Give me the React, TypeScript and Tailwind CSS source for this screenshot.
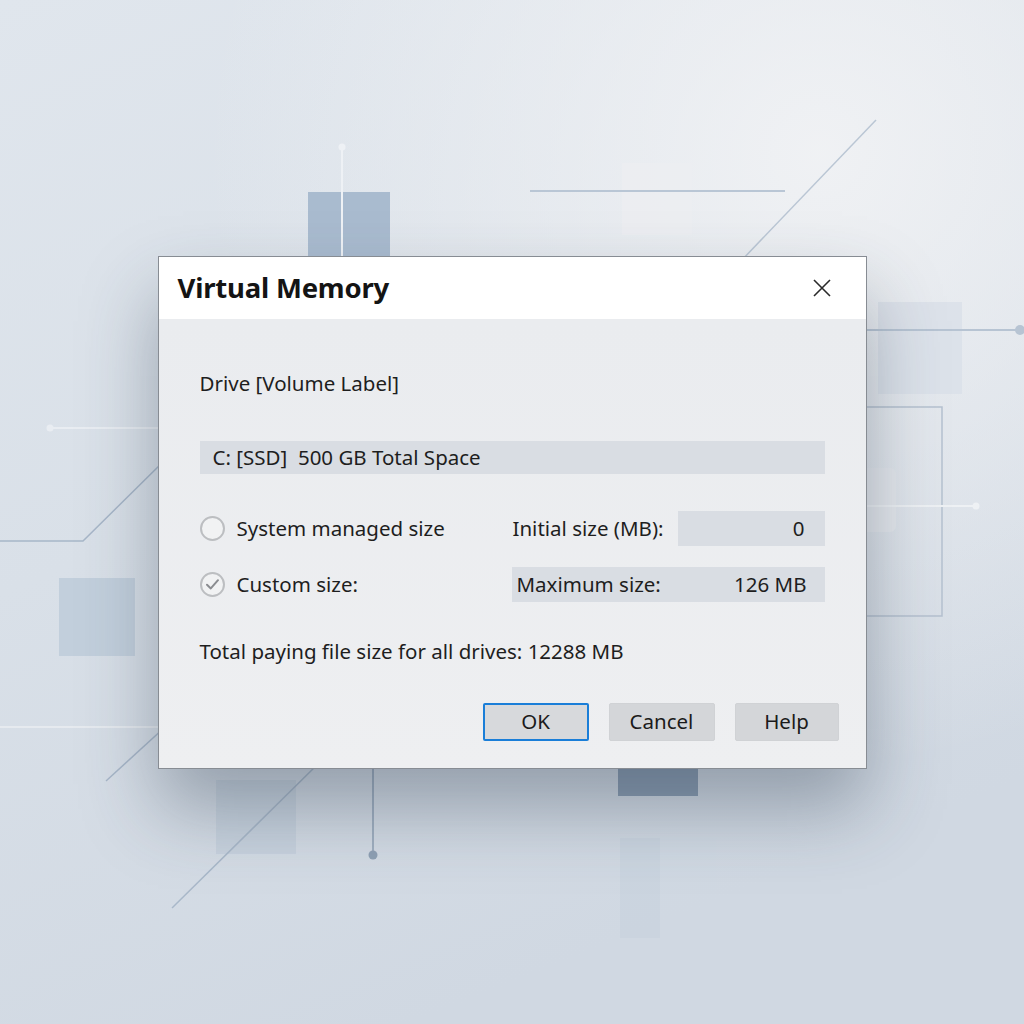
import React from 'react';

const font = { fontFamily: '"Noto Sans", "Open Sans", sans-serif' };

// Soft backdrop with thin circuit-like lines and tiles
const Backdrop: React.FC = () => (
  <svg className="absolute inset-0 h-full w-full" viewBox="0 0 1024 1024" preserveAspectRatio="none">
    <defs>
      <linearGradient id="bg" x1="0" y1="0" x2="0.4" y2="1">
        <stop offset="0" stopColor="#e0e6ed" />
        <stop offset="0.5" stopColor="#d9e0e8" />
        <stop offset="1" stopColor="#d0d8e2" />
      </linearGradient>
      <radialGradient id="glow" cx="0.8" cy="0.15" r="0.6">
        <stop offset="0" stopColor="#f2f3f5" stopOpacity="0.9" />
        <stop offset="1" stopColor="#f2f3f5" stopOpacity="0" />
      </radialGradient>
    </defs>
    <rect width="1024" height="1024" fill="url(#bg)" />
    <rect width="1024" height="1024" fill="url(#glow)" />

    {/* top */}
    <rect x="308" y="192" width="82" height="70" fill="#a9bbcf" />
    <line x1="342" y1="147" x2="342" y2="262" stroke="#eef1f5" strokeWidth="2" />
    <circle cx="342" cy="147" r="3.5" fill="#eef1f5" />
    <rect x="622" y="163" width="70" height="72" fill="#eceef1" opacity="0.8" />
    <line x1="530" y1="191" x2="785" y2="191" stroke="#b9c6d5" strokeWidth="2" />
    <line x1="876" y1="120" x2="740" y2="262" stroke="#bac6d4" strokeWidth="1.5" />

    {/* right */}
    <rect x="878" y="302" width="84" height="92" fill="#d9e0e8" opacity="0.8" />
    <line x1="860" y1="330" x2="1018" y2="330" stroke="#b7c4d3" strokeWidth="2" />
    <circle cx="1020" cy="330" r="5" fill="#b7c4d3" />
    <rect x="860" y="407" width="82" height="209" fill="none" stroke="#b5c1cf" strokeWidth="1.5" />
    <rect x="856" y="468" width="40" height="64" rx="6" fill="#e6e9ed" opacity="0.8" />
    <line x1="860" y1="506" x2="975" y2="506" stroke="#eef1f4" strokeWidth="2" />
    <circle cx="976" cy="506" r="3.5" fill="#eef1f4" />

    {/* left */}
    <line x1="50" y1="428" x2="165" y2="428" stroke="#e9edf2" strokeWidth="2" />
    <circle cx="50" cy="428" r="3.5" fill="#e9edf2" />
    <polyline points="0,541 83,541 165,460" fill="none" stroke="#a7b6c8" strokeWidth="1.5" />
    <rect x="59" y="578" width="76" height="78" fill="#c2cfdc" />
    <line x1="0" y1="727" x2="165" y2="727" stroke="#e6eaef" strokeWidth="2" />
    <line x1="165" y1="727" x2="106" y2="781" stroke="#a7b6c8" strokeWidth="1.5" />

    {/* bottom */}
    <rect x="216" y="780" width="80" height="74" fill="#c3cfdb" opacity="0.7" />
    <line x1="373" y1="760" x2="373" y2="853" stroke="#8fa0b4" strokeWidth="1.5" />
    <circle cx="373" cy="855" r="4.5" fill="#8fa0b4" />
    <line x1="320" y1="762" x2="172" y2="908" stroke="#a9b8c9" strokeWidth="1.5" />
    <rect x="618" y="760" width="80" height="36" fill="#8a9cb1" />
    <rect x="620" y="838" width="40" height="100" fill="#c9d3de" opacity="0.8" />
    <rect x="660" y="838" width="56" height="100" fill="#d0d9e2" opacity="0.7" />
  </svg>
);

const Radio: React.FC<{ checked?: boolean }> = ({ checked }) => (
  <span className="flex h-[25px] w-[25px] items-center justify-center rounded-full border-2 border-[#bcbec1] bg-[#f1f2f3]">
    {checked && (
      <svg width="17" height="17" viewBox="0 0 17 17">
        <path d="M3 8.8 L6.8 12.4 L14 4.2" fill="none" stroke="#8a8c90" strokeWidth="2" strokeLinecap="round" strokeLinejoin="round" />
      </svg>
    )}
  </span>
);

const Button: React.FC<{ label: string; primary?: boolean }> = ({ label, primary }) => (
  <button
    className={`flex h-[38px] items-center justify-center rounded-[2px] text-[20.5px] text-[#1b1b1b] ${
      primary ? 'border-2 border-[#1a7ed8] bg-[#d7d9dc]' : 'border border-[#d0d2d5] bg-[#d4d6d9]'
    }`}
    style={{ width: label === 'Help' ? 104 : 106 }}
  >
    {label}
  </button>
);

export default function App() {
  return (
    <div className="relative flex h-screen w-full items-center justify-center overflow-hidden" style={font}>
      <Backdrop />

      <div className="relative flex h-[513px] w-[709px] flex-col border border-[#878c93] bg-[#edeef0] shadow-[0_40px_70px_rgba(45,60,80,0.38)]">
        {/* title bar */}
        <div className="flex h-[62px] shrink-0 items-center justify-between bg-white pl-[19px] pr-[34px]">
          <h1 className="text-[27.5px] font-bold tracking-[-0.2px] text-[#141414]">Virtual Memory</h1>
          <svg width="20" height="20" viewBox="0 0 20 20">
            <path d="M2 2 L18 18 M18 2 L2 18" stroke="#2a2a2a" strokeWidth="1.6" />
          </svg>
        </div>

        {/* body */}
        <div className="flex flex-1 flex-col bg-gradient-to-b from-[#eaecef] to-[#eeeff1] px-[41px] text-[20.5px] text-[#1e1e1e]">
          <div className="mt-[50px] leading-[28px]">Drive [Volume Label]</div>

          <div className="mt-[44px] flex h-[33px] items-center bg-[#d9dde3] pl-[13px] leading-none">
            C: [SSD]&nbsp; 500 GB Total Space
          </div>

          <div className="mt-[37px] grid grid-cols-[312px_1fr] items-center">
            <div className="flex items-center gap-[12px]">
              <Radio />
              <span>System managed size</span>
            </div>
            <div className="flex items-center justify-between">
              <span className="pl-[1px]">Initial size (MB):</span>
              <div className="flex h-[35px] w-[147px] items-center justify-end bg-[#d9dde3] pr-[20px]">0</div>
            </div>
          </div>

          <div className="mt-[21px] grid grid-cols-[312px_1fr] items-center">
            <div className="flex items-center gap-[12px]">
              <Radio checked />
              <span>Custom size:</span>
            </div>
            <div className="flex h-[35px] items-center justify-between bg-[#d9dde3] pl-[5px] pr-[18px]">
              <span>Maximum size:</span>
              <span>126 MB</span>
            </div>
          </div>

          <div className="mt-[35px] leading-[28px]">Total paying file size for all drives: 12288 MB</div>

          <div className="-mr-[14px] mt-[38px] flex justify-end gap-[20px]">
            <Button label="OK" primary />
            <Button label="Cancel" />
            <Button label="Help" />
          </div>
        </div>
      </div>
    </div>
  );
}
